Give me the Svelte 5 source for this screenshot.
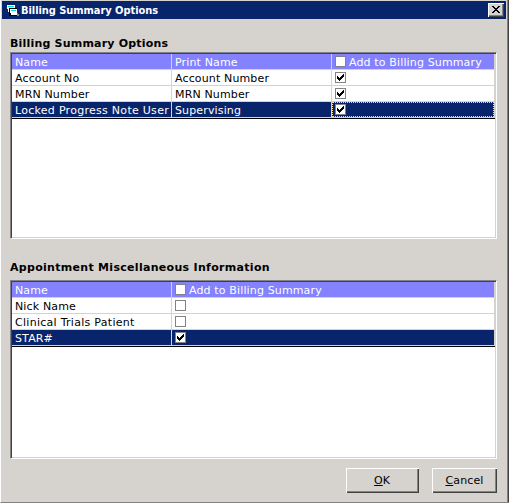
<script>
  const options = [
    { name: 'Account No', print: 'Account Number', checked: true },
    { name: 'MRN Number', print: 'MRN Number', checked: true },
    { name: 'Locked Progress Note User', print: 'Supervising', checked: true, selected: true },
  ];
  const misc = [
    { name: 'Nick Name', checked: false },
    { name: 'Clinical Trials Patient', checked: false },
    { name: 'STAR#', checked: true, selected: true },
  ];
</script>

{#snippet check(checked)}
  <svg class="check" width="11" height="11" viewBox="0 0 11 11" shape-rendering="crispEdges">
    <rect width="11" height="11" fill="#848284" />
    <rect x="1" y="1" width="9" height="9" fill="#fff" />
    {#if checked}
      <path d="M2 4h1v3h-1zM3 5h1v3h-1zM4 6h1v3h-1zM5 5h1v3h-1zM6 4h1v3h-1zM7 3h1v3h-1zM8 2h1v3h-1z" fill="#000" />
    {/if}
  </svg>
{/snippet}

<div class="window">
  <header class="titlebar">
    <svg class="app" width="13" height="12" viewBox="0 0 13 12" shape-rendering="crispEdges">
      <path d="M0 0h8v4h-8z" fill="#fff" />
      <path d="M1 1h6v1h-6z" fill="#00dbde" />
      <path d="M1 4h2v3h-2z" fill="#fff" />
      <path d="M2 3h8v8h-8z" fill="#000" />
      <path d="M3 4h7v6h-7z" fill="#fff" />
      <path d="M4 5h5v1h-5z" fill="#00dbde" />
      <path d="M3 8h1v2h-1z" fill="#000" />
      <path d="M10 8h1v1h1v2h-2z" fill="#848284" />
    </svg>
    <span class="title">Billing Summary Options</span>
    <button class="close" aria-label="Close">
      <svg width="8" height="7" viewBox="0 0 8 7" shape-rendering="crispEdges">
        <path d="M0 0h2v1h-2zM6 0h2v1h-2zM1 1h2v1h-2zM5 1h2v1h-2zM2 2h4v1h-4zM3 3h2v1h-2zM2 4h4v1h-4zM1 5h2v1h-2zM5 5h2v1h-2zM0 6h2v1h-2zM6 6h2v1h-2z" fill="#000" />
      </svg>
    </button>
  </header>

  <main>
    <h2>Billing Summary Options</h2>
    <div class="grid first">
      <div class="row head">
        <div class="cell">Name</div>
        <div class="cell">Print Name</div>
        <div class="cell wide">{@render check(false)}<span class="add">Add to Billing Summary</span></div>
      </div>
      {#each options as o}
        <div class="row" class:selected={o.selected}>
          <div class="cell" class:long={o.name.length > 20}>{o.name}</div>
          <div class="cell">{o.print}</div>
          <div class="cell wide" class:focus={o.selected}>{@render check(o.checked)}</div>
        </div>
      {/each}
      <div class="end"></div>
    </div>

    <h2 class="misc">Appointment Miscellaneous Information</h2>
    <div class="grid second">
      <div class="row head">
        <div class="cell">Name</div>
        <div class="cell wide">{@render check(false)}<span class="add">Add to Billing Summary</span></div>
      </div>
      {#each misc as o}
        <div class="row" class:selected={o.selected}>
          <div class="cell" class:long={o.name.length > 20}>{o.name}</div>
          <div class="cell wide">{@render check(o.checked)}</div>
        </div>
      {/each}
      <div class="end"></div>
    </div>

    <footer>
      <button class="btn ok"><u>O</u>K</button>
      <button class="btn cancel"><u>C</u>ancel</button>
    </footer>
  </main>
</div>

<style>
  :global(body) { margin: 0; overflow: hidden; background: #d6d3ce; }
  * { box-sizing: border-box; }
  .window {
    width: 509px;
    height: 503px;
    background: #d6d3ce;
    border-left: 1px solid #fff;
    border-bottom: 1px solid #848284;
    padding: 1px 0 0 1px;
    box-shadow: inset -1px 0 #424142, inset -2px 0 #848284;
    font: 11px/17px "DejaVu Sans", Verdana, sans-serif;
    letter-spacing: 0.14px;
    color: #000;
    overflow: hidden;
  }
  .titlebar {
    width: 504px;
    height: 18px;
    background: #08246b;
    display: flex;
    align-items: flex-start;
    padding: 2px 2px 0 5px;
  }
  .app { margin-top: 2px; flex: none; }
  .title {
    flex: 1;
    margin-left: 1px;
    color: #fff;
    font: bold 11px/16px "DejaVu Sans Condensed", Tahoma, sans-serif;
    letter-spacing: -0.05px;
    white-space: nowrap;
  }
  button {
    background: #d6d3ce;
    border: 0;
    border-radius: 0;
    padding: 0;
    color: #000;
    box-shadow: inset 1px 1px #fff, inset -1px -1px #424142, inset -2px -2px #848284;
    display: flex;
    justify-content: center;
  }
  .close { width: 16px; height: 14px; padding-top: 3px; }
  main { padding: 0 0 0 8px; }
  h2 {
    margin: 0;
    padding-top: 17px;
    height: 33px;
    font-size: 11px;
    line-height: 15px;
    font-weight: bold;
    letter-spacing: 0.2px;
    white-space: nowrap;
  }
  h2.misc { height: 41px; padding-top: 21px; letter-spacing: 0.3px; }
  .grid {
    width: 487px;
    background: #fff;
    border: 1px solid;
    border-color: #848284 #fff #fff #848284;
    box-shadow: inset 1px 1px #424142, inset -1px -1px #d6d3ce;
    padding: 1px;
  }
  .first { height: 187px; }
  .second { height: 179px; }
  .row { display: flex; height: 16px; }
  .cell {
    width: 160px;
    height: 16px;
    padding-left: 3px;
    border-right: 1px solid #d6d3ce;
    border-bottom: 1px solid #d6d3ce;
    white-space: nowrap;
    display: flex;
  }
  .long { letter-spacing: 0.28px; }
  .wide { flex: 1; }
  .head .cell { background: #8482ff; color: #fff; }
  .selected .cell { background: #08246b; color: #fff; }
  .focus { position: relative; }
  .focus::after { content: ""; position: absolute; inset: 0; border: 1px dotted #f7db94; }
  .check { margin-top: 2px; flex: none; }
  .add { margin-left: 3px; }
  .end { height: 1px; background: #000; }
  footer { display: flex; gap: 13px; padding: 9px 0 0 336px; }
  .btn { height: 25px; font: 11px/25px "DejaVu Sans", Verdana, sans-serif; }
  .ok { width: 73px; padding-right: 1px; }
  .cancel { width: 65px; letter-spacing: 0.14px; }
  u { text-underline-offset: 1px; text-decoration-thickness: 1px; }
</style>
